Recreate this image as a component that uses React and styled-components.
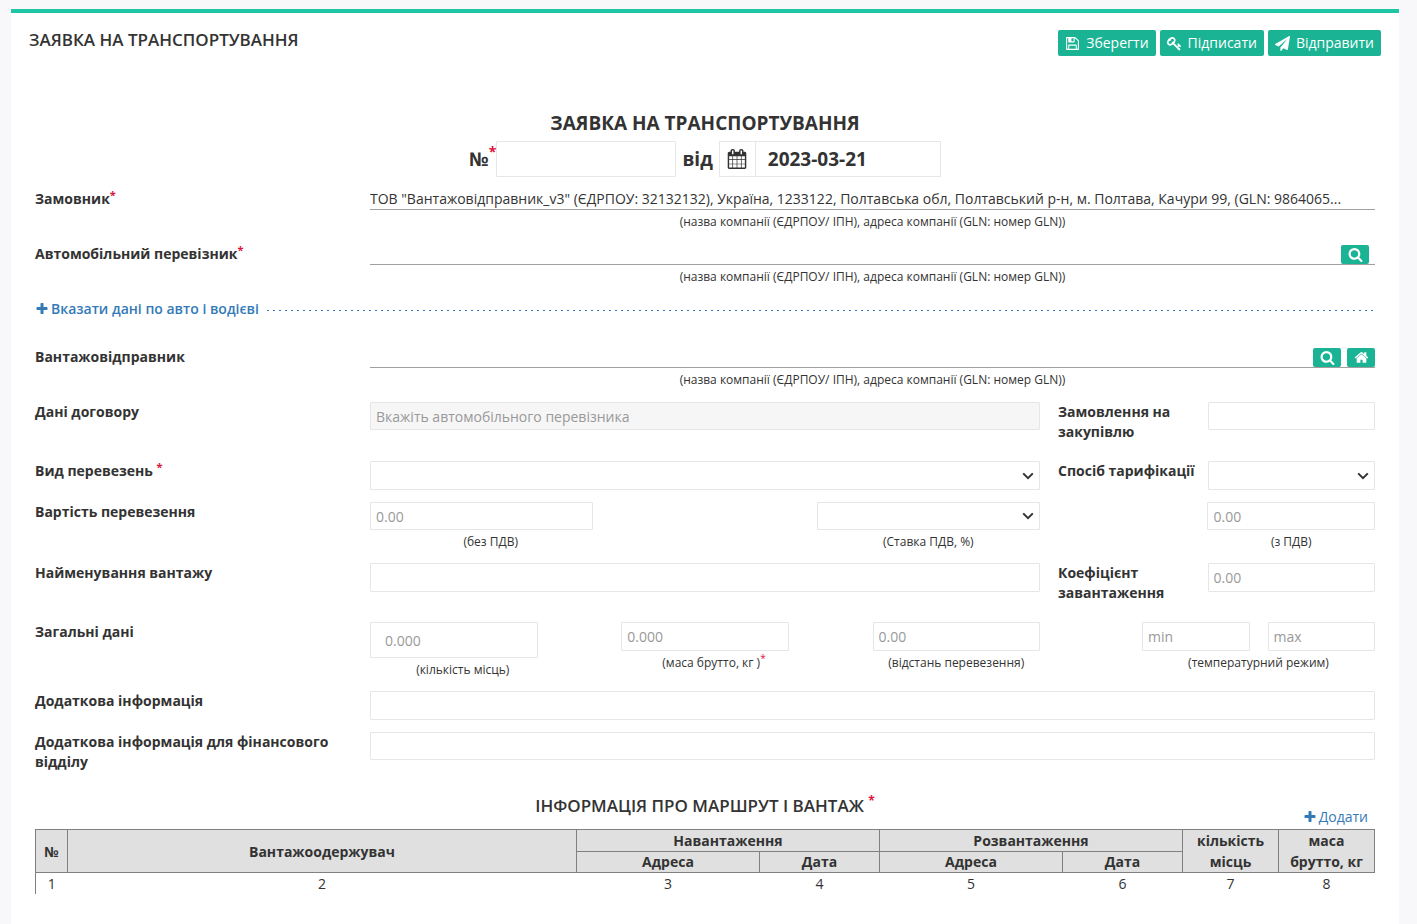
import React from "react";
import styled, { createGlobalStyle } from "styled-components";

const GlobalStyle = createGlobalStyle`
  *, *::before, *::after { box-sizing: border-box; }
  body {
    margin: 0;
    background: #f8f8fb;
    color: #333;
    font-family: "Open Sans", "Noto Sans", sans-serif;
    font-size: 14px;
    line-height: 20px;
  }
  input, select, button { font: inherit; color: inherit; }
`;

const ICONS = {
  save: "M512 1536h768v-384h-768v384zm896 0h128v-896q0-14-10-38.5t-20-34.5l-281-281q-10-10-34-20t-39-10v416q0 40-28 68t-68 28h-576q-40 0-68-28t-28-68v-416h-128v1280h128v-416q0-40 28-68t68-28h832q40 0 68 28t28 68v416zm-384-928v-320q0-13-9.5-22.5t-22.5-9.5h-192q-13 0-22.5 9.5t-9.5 22.5v320q0 13 9.5 22.5t22.5 9.5h192q13 0 22.5-9.5t9.5-22.5zm640 32v928q0 40-28 68t-68 28h-1344q-40 0-68-28t-28-68v-1344q0-40 28-68t68-28h928q40 0 88 20t76 48l280 280q28 28 48 76t20 88z",
  key: "M832 512q0-80-56-136t-136-56-136 56-56 136q0 42 19 83-41-19-83-19-80 0-136 56t-56 136 56 136 136 56 136-56 56-136q0-42-19-83 41 19 83 19 80 0 136-56t56-136zm851 704q0 17-49 66t-66 49q-9 0-28.5-16t-36.5-33-38.5-40-24.5-26l-96 96 220 220q28 28 28 68 0 42-39 81t-81 39q-40 0-68-28l-671-671q-176 131-365 131-163 0-265.5-102.5t-102.5-265.5q0-160 95-313t248-248 313-95q163 0 265.5 102.5t102.5 265.5q0 189-131 365l355 355 96-96q-3-3-26-24.5t-40-38.5-33-36.5-16-28.5q0-17 49-66t66-49q13 0 23 10 6 6 46 44.5t82 79.5 86.5 86 73 78 28.5 41z",
  send: "M1764 11q33 24 27 64l-256 1536q-5 29-32 45-14 8-31 8-11 0-24-5l-453-185-242 295q-18 23-49 23-13 0-22-4-19-7-30.5-23.5t-11.5-36.5v-349l864-1059-1069 925-395-162q-37-14-40-55-2-40 32-59l1664-960q15-9 32-9 20 0 36 11z",
  search: "M1216 832q0-185-131.5-316.5t-316.5-131.5-316.5 131.5-131.5 316.5 131.5 316.5 316.5 131.5 316.5-131.5 131.5-316.5zm512 832q0 52-38 90t-90 38q-54 0-90-38l-343-342q-179 124-399 124-143 0-273.5-55.5t-225-150-150-225-55.5-273.5 55.5-273.5 150-225 225-150 273.5-55.5 273.5 55.5 225 150 150 225 55.5 273.5q0 220-124 399l343 343q37 37 37 90z",
  home: "M1472 992v480q0 26-19 45t-45 19h-384v-384h-256v384h-384q-26 0-45-19t-19-45v-480q0-1 .5-3t.5-3l575-474 575 474q1 2 1 6zm223-69l-62 74q-8 9-21 11h-3q-13 0-21-7l-692-577-692 577q-12 8-24 7-13-2-21-11l-62-74q-8-10-7-23.5t11-21.5l719-599q32-26 76-26t76 26l244 204v-195q0-14 9-23t23-9h192q14 0 23 9t9 23v408l219 182q10 8 11 21.5t-7 23.5z",
  plus: "M1600 736v192q0 40-28 68t-68 28h-416v416q0 40-28 68t-68 28h-192q-40 0-68-28t-28-68v-416h-416q-40 0-68-28t-28-68v-192q0-40 28-68t68-28h416v-416q0-40 28-68t68-28h192q40 0 68 28t28 68v416h416q40 0 68 28t28 68z",
  calendar: "M192 1664h288v-288h-288v288zm352 0h320v-288h-320v288zm-352-352h288v-320h-288v320zm352 0h320v-320h-320v320zm-352-384h288v-288h-288v288zm736 736h320v-288h-320v288zm-384-736h320v-288h-320v288zm768 736h288v-288h-288v288zm-384-352h320v-320h-320v320zm-352-864v-288q0-13-9.5-22.5t-22.5-9.5h-64q-13 0-22.5 9.5t-9.5 22.5v288q0 13 9.5 22.5t22.5 9.5h64q13 0 22.5-9.5t9.5-22.5zm736 864h288v-320h-288v320zm-384-384h320v-288h-320v288zm384 0h288v-288h-288v288zm32-480v-288q0-13-9.5-22.5t-22.5-9.5h-64q-13 0-22.5 9.5t-9.5 22.5v288q0 13 9.5 22.5t22.5 9.5h64q13 0 22.5-9.5t9.5-22.5zm384-64v1280q0 52-38 90t-90 38h-1408q-52 0-90-38t-38-90v-1280q0-52 38-90t90-38h128v-96q0-66 47-113t113-47h64q66 0 113 47t47 113v96h384v-96q0-66 47-113t113-47h64q66 0 113 47t47 113v96h128q52 0 90 38t38 90z",
};

const Svg = styled.svg`
  flex: none;
  width: ${(p) => p.$size}px;
  height: ${(p) => p.$size}px;
  fill: currentColor;
`;

const Icon = ({ name, size = 15 }) => (
  <Svg $size={size} viewBox="0 0 1792 1792" aria-hidden="true">
    <path d={ICONS[name]} />
  </Svg>
);

const Panel = styled.main`
  min-height: calc(100vh - 9px);
  margin: 9px 18px 0 11px;
  border-top: 4px solid #1fc5a5;
  background: #fff;
`;

const Header = styled.header`
  display: flex;
  justify-content: space-between;
  align-items: flex-start;
  padding: 17px 18px 0;
`;

const PageTitle = styled.h1`
  margin: 0;
  font-size: 17px;
  line-height: 19px;
  font-weight: 600;
`;

const Toolbar = styled.div`
  display: flex;
  gap: 4px;
`;

const ActionButton = styled.button`
  display: flex;
  align-items: center;
  gap: 6px;
  height: 26px;
  padding: 0 7px;
  border: 0;
  border-radius: 2px;
  background: #1ab394;
  color: #fff;
`;

const Form = styled.form`
  padding: 54px 24px 29px;
`;

const FormTitle = styled.h2`
  margin: 0;
  text-align: center;
  font-size: 19px;
  line-height: 26px;
  font-weight: 700;
`;

const NumberLine = styled.div`
  display: flex;
  justify-content: center;
  align-items: center;
  margin: 5px 0 12px;
  font-size: 19px;
  font-weight: 700;
`;

const Between = styled.label`
  padding: 0 6px;
`;

const Star = styled.sup`
  color: #dc143c;
  font-size: ${(p) => p.$size || 11}px;
  font-weight: ${(p) => p.$weight || 700};
  line-height: 0;
  vertical-align: ${(p) => p.$rise || 5}px;
`;

const Input = styled.input`
  display: block;
  width: 100%;
  min-width: 0;
  height: ${(p) => (p.$tall ? 36 : p.$short ? 28 : 29)}px;
  padding: ${(p) => (p.$tall ? "0 14px" : "0 5px")};
  border: 1px solid #e5e6e7;
  border-radius: 1px;
  background: #fff;
  outline: 0;
  &::placeholder { color: #999; opacity: 1; }
  &:disabled { background: #f6f6f6; }
`;

const NumberInput = styled(Input)`
  width: 180px;
`;

const DateGroup = styled.div`
  display: flex;
  width: 222px;
`;

const DateButton = styled.button`
  display: flex;
  align-items: center;
  justify-content: center;
  flex: none;
  width: 37px;
  height: 36px;
  margin-right: -1px;
  padding: 0;
  border: 1px solid #e5e6e7;
  background: #fff;
`;

const DateInput = styled(Input)`
  padding: 0 12px;
  border-radius: 0;
`;

const SelectBox = styled.div`
  display: grid;
  grid-template-areas: "field";
  align-items: center;
  & > * { grid-area: field; }
`;

const SelectField = styled.select`
  appearance: none;
  width: 100%;
  height: ${(p) => (p.$short ? 28 : 29)}px;
  padding: 0 24px 0 5px;
  border: 1px solid #e5e6e7;
  border-radius: 1px;
  background: #fff;
`;

const Chevron = styled.svg`
  justify-self: end;
  width: 12px;
  height: 8px;
  margin-right: 6px;
  fill: none;
  stroke: #333;
  stroke-width: 2;
  pointer-events: none;
`;

const Select = (props) => (
  <SelectBox>
    <SelectField {...props} />
    <Chevron viewBox="0 0 12 8" aria-hidden="true">
      <path d="M1.2 1.4 6 6.2l4.800-4.800" />
    </Chevron>
  </SelectBox>
);

const Rows = styled.div`
  display: flex;
  flex-direction: column;
  gap: 12px;
`;

const Row = styled.div`
  display: grid;
  grid-template-columns: minmax(0, 1fr) minmax(0, 3fr);
`;

const Label = styled.label`
  display: block;
  padding-right: 15px;
  font-weight: 700;
`;

const SideLabel = styled(Label)`
  padding: 0 0 7px 18px;
`;

const ShortSideLabel = styled(SideLabel)`
  padding-bottom: 0;
  white-space: nowrap;
`;

const Columns = styled.div`
  display: grid;
  grid-template-columns: ${(p) => p.$cols};
  align-items: start;
`;

const Cell = styled.div`
  min-width: 0;
  grid-column: ${(p) => p.$at || "auto"};
`;

const Hint = styled.div`
  padding-top: 3px;
  padding-left: ${(p) => (p.$indent ? 18 : 0)}px;
  text-align: center;
  font-size: 12px;
  line-height: 18px;
`;

const LookupHint = styled(Hint)`
  padding-bottom: 1px;
`;

const Lookup = styled.div`
  display: flex;
  align-items: flex-end;
  gap: 6px;
  height: 21px;
  padding-right: ${(p) => p.$inset || 0}px;
  border-bottom: 1px solid #a0a0a0;
`;

const LookupInput = styled.input`
  flex: 1;
  min-width: 0;
  height: 20px;
  padding: 0;
  border: 0;
  outline: 0;
  background: transparent;
  text-overflow: ellipsis;
`;

const IconButton = styled.button`
  display: flex;
  align-items: center;
  justify-content: center;
  width: 28px;
  height: 19px;
  padding: 0;
  border: 0;
  border-radius: 2px;
  background: #1ab394;
  color: #fff;
`;

const Expander = styled.div`
  display: flex;
  align-items: center;
  gap: 8px;
  margin-bottom: 16px;
  height: 20px;
  &::after {
    content: "";
    flex: 1;
    height: 1px;
    margin-top: 3px;
    background: repeating-linear-gradient(90deg, #337ab7 0 2px, transparent 2px 6px);
  }
`;

const PlusLink = styled.a`
  display: flex;
  align-items: center;
  gap: 2px;
  color: #337ab7;
  font-weight: ${(p) => (p.$strong ? 600 : 400)};
  text-decoration: none;
`;

const TemperatureCell = styled.div`
  padding-left: 102px;
`;

const Pair = styled.div`
  display: flex;
  gap: 18px;
`;

const SectionTitle = styled.h3`
  margin: 23px 0 0;
  text-align: center;
  font-size: 17px;
  line-height: 22px;
  font-weight: 600;
`;

const AddLine = styled.div`
  display: flex;
  justify-content: flex-end;
  padding-right: 7px;
  margin-bottom: 2px;
  margin-top: -10px;
`;

const Table = styled.table`
  width: 100%;
  table-layout: fixed;
  border-collapse: collapse;
  text-align: center;
  line-height: 21px;
  th, td { padding: 0; }
  th {
    border: 1px solid #808080;
    background: #e0e0e0;
    font-weight: 700;
  }
  td:first-child { border-left: 1px solid #808080; }
`;

const SubHeadRow = styled.tr`
  line-height: 20px;
`;

const Col = styled.col`
  width: ${(p) => (p.$w ? `${p.$w}px` : "auto")};
`;

const HINT = "(назва компанії (ЄДРПОУ/ ІПН), адреса компанії (GLN: номер GLN))";
const CUSTOMER =
  'ТОВ "Вантажовідправник_v3" (ЄДРПОУ: 32132132), Україна, 1233122, Полтавська обл, Полтавський р-н, м. Полтава, Качури 99, (GLN: 9864065...';
const SPLIT = "minmax(0, 12fr) minmax(0, 3fr) minmax(0, 3fr)";
const COLUMN_WIDTHS = [32, 0, 183, 120, 183, 120, 96, 96];

export default function App() {
  return (
    <>
      <GlobalStyle />
      <Panel>
        <Header>
          <PageTitle>ЗАЯВКА НА ТРАНСПОРТУВАННЯ</PageTitle>
          <Toolbar>
            <ActionButton type="button"><Icon name="save" />Зберегти</ActionButton>
            <ActionButton type="button"><Icon name="key" />Підписати</ActionButton>
            <ActionButton type="button"><Icon name="send" />Відправити</ActionButton>
          </Toolbar>
        </Header>

        <Form>
          <FormTitle>ЗАЯВКА НА ТРАНСПОРТУВАННЯ</FormTitle>
          <NumberLine>
            <label htmlFor="number">№<Star $size={14} $rise={9}>*</Star></label>
            <NumberInput id="number" $tall />
            <Between htmlFor="date">від</Between>
            <DateGroup>
              <DateButton type="button" aria-label="Календар"><Icon name="calendar" size={20} /></DateButton>
              <DateInput id="date" $tall defaultValue="2023-03-21" />
            </DateGroup>
          </NumberLine>

          <Rows>
            <Row>
              <Label htmlFor="customer">Замовник<Star>*</Star></Label>
              <div>
                <Lookup $inset={6}><LookupInput id="customer" readOnly value={CUSTOMER} /></Lookup>
                <LookupHint>{HINT}</LookupHint>
              </div>
            </Row>
            <Row>
              <Label htmlFor="carrier">Автомобільний перевізник<Star>*</Star></Label>
              <div>
                <Lookup $inset={6}>
                  <LookupInput id="carrier" />
                  <IconButton type="button" aria-label="Пошук"><Icon name="search" /></IconButton>
                </Lookup>
                <LookupHint>{HINT}</LookupHint>
              </div>
            </Row>
            <Expander>
              <PlusLink href="#vehicle" $strong><Icon name="plus" size={14} />Вказати дані по авто і водієві</PlusLink>
            </Expander>
            <Row>
              <Label htmlFor="shipper">Вантажовідправник</Label>
              <div>
                <Lookup>
                  <LookupInput id="shipper" />
                  <IconButton type="button" aria-label="Пошук"><Icon name="search" /></IconButton>
                  <IconButton type="button" aria-label="Своя компанія"><Icon name="home" /></IconButton>
                </Lookup>
                <LookupHint>{HINT}</LookupHint>
              </div>
            </Row>
            <Row>
              <Label htmlFor="contract">Дані договору</Label>
              <Columns $cols={SPLIT}>
                <Input id="contract" $short disabled placeholder="Вкажіть автомобільного перевізника" />
                <SideLabel htmlFor="order">Замовлення на закупівлю</SideLabel>
                <Input id="order" $short />
              </Columns>
            </Row>
            <Row>
              <Label htmlFor="kind">Вид перевезень <Star>*</Star></Label>
              <Columns $cols={SPLIT}>
                <Select id="kind" />
                <ShortSideLabel htmlFor="tariff">Спосіб тарифікації</ShortSideLabel>
                <Select id="tariff" />
              </Columns>
            </Row>
            <Row>
              <Label htmlFor="price">Вартість перевезення</Label>
              <Columns $cols="4fr 4fr 4fr 3fr 3fr">
                <Cell>
                  <Input id="price" $short placeholder="0.00" />
                  <Hint $indent>(без ПДВ)</Hint>
                </Cell>
                <Cell $at="3">
                  <Select $short aria-label="Ставка ПДВ" />
                  <Hint>(Ставка ПДВ, %)</Hint>
                </Cell>
                <Cell $at="5">
                  <Input $short aria-label="з ПДВ" placeholder="0.00" />
                  <Hint>(з ПДВ)</Hint>
                </Cell>
              </Columns>
            </Row>
            <Row>
              <Label htmlFor="cargo">Найменування вантажу</Label>
              <Columns $cols={SPLIT}>
                <Input id="cargo" />
                <SideLabel htmlFor="factor">Коефіцієнт завантаження</SideLabel>
                <Input id="factor" placeholder="0.00" />
              </Columns>
            </Row>
            <Row>
              <Label htmlFor="places">Загальні дані</Label>
              <Columns $cols="2fr 1fr 2fr 1fr 2fr 4fr">
                <Cell>
                  <Input id="places" $tall placeholder="0.000" />
                  <Hint $indent>(кількість місць)</Hint>
                </Cell>
                <Cell $at="3">
                  <Input aria-label="маса брутто, кг" placeholder="0.000" />
                  <Hint $indent>(маса брутто, кг )<Star $size={10} $weight={400}>*</Star></Hint>
                </Cell>
                <Cell $at="5">
                  <Input aria-label="відстань перевезення" placeholder="0.00" />
                  <Hint>(відстань перевезення)</Hint>
                </Cell>
                <TemperatureCell>
                  <Pair>
                    <Input aria-label="мінімальна температура" placeholder="min" />
                    <Input aria-label="максимальна температура" placeholder="max" />
                  </Pair>
                  <Hint>(температурний режим)</Hint>
                </TemperatureCell>
              </Columns>
            </Row>
            <Row>
              <Label htmlFor="info">Додаткова інформація</Label>
              <Input id="info" />
            </Row>
            <Row>
              <Label htmlFor="finance">Додаткова інформація для фінансового відділу</Label>
              <Input id="finance" $short />
            </Row>
          </Rows>

          <SectionTitle>ІНФОРМАЦІЯ ПРО МАРШРУТ І ВАНТАЖ <Star $size={12} $rise={7}>*</Star></SectionTitle>
          <AddLine>
            <PlusLink href="#add"><Icon name="plus" size={14} />Додати</PlusLink>
          </AddLine>
          <Table>
            <colgroup>
              {COLUMN_WIDTHS.map((w, i) => <Col key={i} $w={w} />)}
            </colgroup>
            <thead>
              <tr>
                <th rowSpan={2}>№</th>
                <th rowSpan={2}>Вантажоодержувач</th>
                <th colSpan={2}>Навантаження</th>
                <th colSpan={2}>Розвантаження</th>
                <th rowSpan={2}>кількість<br />місць</th>
                <th rowSpan={2}>маса<br />брутто, кг</th>
              </tr>
              <SubHeadRow>
                <th>Адреса</th>
                <th>Дата</th>
                <th>Адреса</th>
                <th>Дата</th>
              </SubHeadRow>
            </thead>
            <tbody>
              <tr>
                {COLUMN_WIDTHS.map((_, i) => <td key={i}>{i + 1}</td>)}
              </tr>
            </tbody>
          </Table>
        </Form>
      </Panel>
    </>
  );
}
